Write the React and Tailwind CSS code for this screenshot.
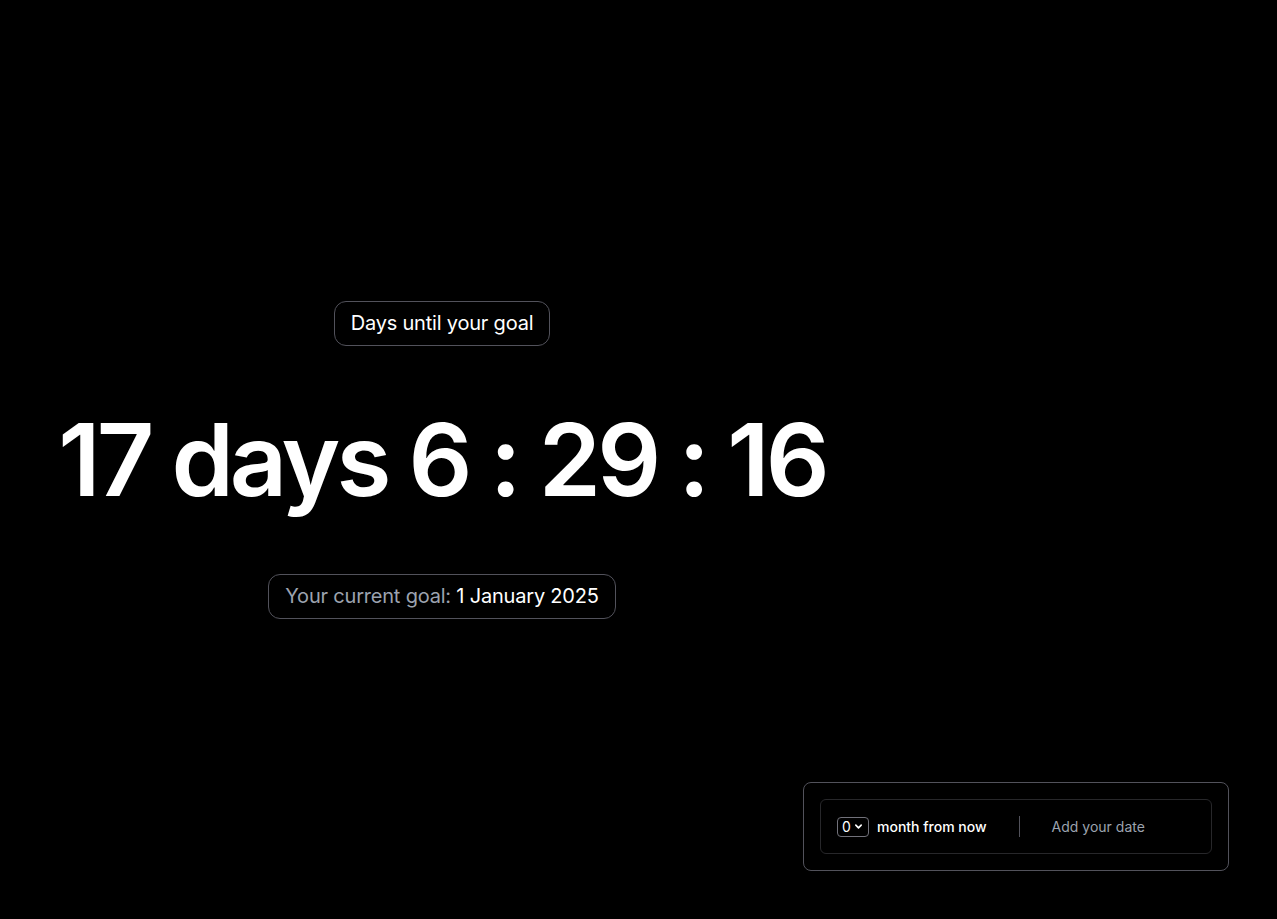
import React from "react";

export default function App() {
  return (
    <div
      className="relative min-h-screen w-full bg-black text-white"
      style={{ fontFamily: "Inter, 'Noto Sans', sans-serif" }}
    >
      <div className="flex h-[919px] w-[884px] flex-col items-center justify-center gap-16">
        <div className="rounded-xl border border-[#52525b] px-4 py-[9px] text-xl leading-[25px] tracking-[-0.01em] text-white">
          Days until your goal
        </div>
        <div className="text-[100px] font-semibold leading-[100px] tracking-[-0.04em] text-white">
          17 days 6 : 29 : 16
        </div>
        <div className="rounded-xl border border-[#52525b] px-4 py-[9px] text-xl leading-[25px] tracking-[-0.01em]">
          <span className="text-[#9ca3af]">Your current goal: </span>
          <span className="text-white">1 January 2025</span>
        </div>
      </div>

      <div className="absolute bottom-[48px] right-[48px] w-[426px] rounded-lg border border-[#52525b] p-4">
        <div className="flex h-[55px] items-center rounded-md border border-[#27272a] bg-black px-4">
          <div className="flex items-center gap-2">
            <div className="flex h-[20px] w-[32px] items-center gap-[3px] rounded-[4px] border border-[#71717a] px-[4px] text-sm text-white">
              <span>0</span>
              <svg width="9" height="9" viewBox="0 0 10 10" fill="none" stroke="white" strokeWidth="1.8" strokeLinecap="round" strokeLinejoin="round">
                <path d="M2 3.5 L5 6.5 L8 3.5" />
              </svg>
            </div>
            <span className="text-sm font-medium text-white">month from now</span>
          </div>
          <div className="ml-8 h-[21px] w-px bg-[#52525b]" />
          <span className="ml-8 text-sm text-[#9ca3af]">Add your date</span>
        </div>
      </div>
    </div>
  );
}
